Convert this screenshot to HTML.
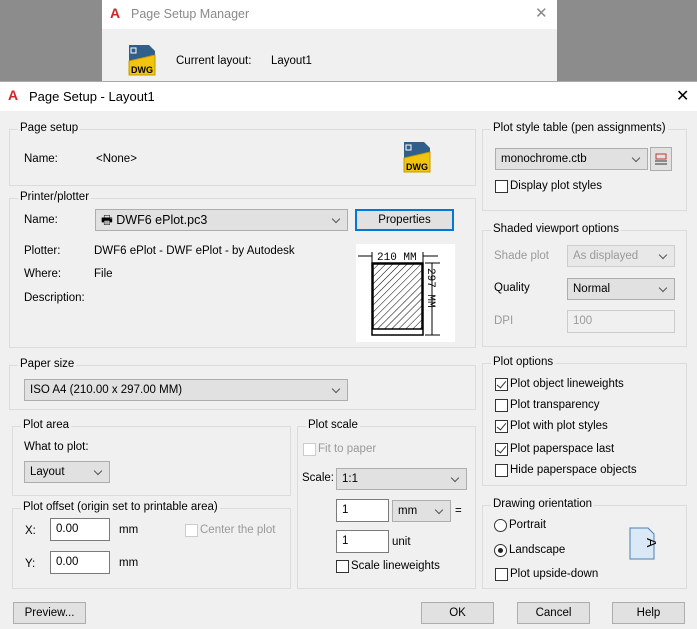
<!DOCTYPE html>
<html><head><style>
*{box-sizing:border-box;margin:0;padding:0}
body{width:697px;height:629px;position:relative;overflow:hidden;background:#8c8c8c;font-family:"Liberation Sans",sans-serif;font-size:11.5px;color:#000}
.a{position:absolute;white-space:nowrap}
.g{position:absolute;border:1px solid #dcdcdc}
.gl{position:absolute;top:-8px;left:8px;background:#f0f0f0;padding:0 2px;font-size:11.5px}
.dd{position:absolute;background:#e1e1e1;border:1px solid #adadad;height:22px;padding:0 5px;line-height:21px}
.dd:after{content:"";position:absolute;right:8px;top:6px;width:5px;height:5px;border-right:1px solid #555;border-bottom:1px solid #555;transform:rotate(45deg)}
.dis{color:#9a9a9a}
.in{position:absolute;background:#fff;border:1px solid #7a7a7a;height:23px;padding:4px 5px}
.btn{position:absolute;background:#e1e1e1;border:1px solid #adadad;height:22px;text-align:center;line-height:20px}
.cb{position:absolute;width:13px;height:13px;border:1px solid #333;background:#fff}
.cb.ck:after{content:"";position:absolute;left:3px;top:0px;width:4px;height:8px;border-right:1.5px solid #333;border-bottom:1.5px solid #333;transform:rotate(40deg)}
.cb.d{border-color:#ccc}
.rb{position:absolute;width:13px;height:13px;border:1px solid #333;border-radius:50%;background:#fff}
</style></head><body>
<div class="a" style="left:102px;top:0;width:455px;height:82px;background:#f0f0f0"></div>
<div class="a" style="left:102px;top:0;width:455px;height:29px;background:#fff"></div>
<div class="a" style="left:110px;top:5px;color:#d0242a;font-weight:bold;font-size:14px">A</div>
<div class="a" style="left:131px;top:7px;color:#8a8a8a;font-size:12.5px">Page Setup Manager</div>
<div class="a" style="left:535px;top:4px;color:#888;font-size:15px">✕</div>
<svg class="a" style="left:126px;top:43px" width="32" height="34"><path d="M3 2h20l6 6v10H3z" fill="#2f5f8a"/><path d="M3 18L29 12v20H3z" fill="#f1c40f" stroke="#c49a00"/><rect x="5" y="5" width="5" height="5" fill="none" stroke="#fff"/><text x="5" y="30" font-size="9" font-weight="bold" font-family="Liberation Sans">DWG</text></svg>
<div class="a" style="left:176px;top:55px">Current layout:</div>
<div class="a" style="left:271px;top:55px">Layout1</div>
<div class="a" style="left:0;top:81px;width:697px;height:548px;background:#f0f0f0;border-top:1px solid #7eb4ea"></div>
<div class="a" style="left:0;top:82px;width:697px;height:29px;background:#fff"></div>
<div class="a" style="left:8px;top:87px;color:#d0242a;font-weight:bold;font-size:14px">A</div>
<div class="a" style="left:29px;top:89px;font-size:13px">Page Setup - Layout1</div>
<div class="a" style="left:676px;top:86px;font-size:16px">✕</div>

<div class="g" style="left:9px;top:129px;width:467px;height:57px"><span class="gl">Page setup</span></div>
<div class="a" style="left:24px;top:153px">Name:</div>
<div class="a" style="left:96px;top:153px">&lt;None&gt;</div>
<svg class="a" style="left:402px;top:140px" width="32" height="34"><path d="M2 2h20l6 6v10H2z" fill="#2f5f8a"/><path d="M2 18L28 12v20H2z" fill="#f1c40f" stroke="#c49a00"/><rect x="4" y="5" width="5" height="5" fill="none" stroke="#fff"/><text x="4" y="30" font-size="9" font-weight="bold" font-family="Liberation Sans">DWG</text></svg>

<div class="g" style="left:9px;top:198px;width:467px;height:150px"><span class="gl">Printer/plotter</span></div>
<div class="a" style="left:24px;top:214px">Name:</div>
<div class="dd" style="left:95px;top:209px;width:253px;font-size:12.5px">🖶 DWF6 ePlot.pc3</div>
<div class="btn" style="left:355px;top:209px;width:99px;border:2px solid #0078d7;line-height:18px">Properties</div>
<div class="a" style="left:24px;top:245px">Plotter:</div>
<div class="a" style="left:94px;top:245px">DWF6 ePlot - DWF ePlot - by Autodesk</div>
<div class="a" style="left:24px;top:268px">Where:</div>
<div class="a" style="left:94px;top:268px">File</div>
<div class="a" style="left:24px;top:292px">Description:</div>
<svg class="a" style="left:356px;top:244px" width="99" height="98"><rect width="99" height="98" fill="#fff"/><defs><pattern id="h" width="5" height="5" patternUnits="userSpaceOnUse" patternTransform="rotate(45)"><line x1="0" y1="0" x2="0" y2="5" stroke="#000" stroke-width="1"/></pattern></defs><rect x="16" y="19" width="51" height="72" fill="none" stroke="#000" stroke-width="1.5"/><rect x="17" y="20" width="49" height="65" fill="url(#h)" stroke="#000" stroke-width="1.5"/><line x1="16" y1="8" x2="16" y2="19" stroke="#000"/><line x1="67" y1="8" x2="67" y2="19" stroke="#000"/><line x1="2" y1="12" x2="16" y2="12" stroke="#000"/><line x1="67" y1="12" x2="82" y2="12" stroke="#000"/><text x="21" y="16" font-size="11" font-family="Liberation Mono">210 MM</text><line x1="69" y1="19" x2="84" y2="19" stroke="#000"/><line x1="69" y1="91" x2="84" y2="91" stroke="#000"/><line x1="76" y1="19" x2="76" y2="91" stroke="#000"/><text x="72" y="24" font-size="11" font-family="Liberation Mono" transform="rotate(90 72 24)">297 MM</text></svg>

<div class="g" style="left:9px;top:365px;width:467px;height:45px"><span class="gl">Paper size</span></div>
<div class="dd" style="left:24px;top:379px;width:324px">ISO A4 (210.00 x 297.00 MM)</div>

<div class="g" style="left:12px;top:426px;width:279px;height:70px"><span class="gl">Plot area</span></div>
<div class="a" style="left:24px;top:441px">What to plot:</div>
<div class="dd" style="left:24px;top:461px;width:86px">Layout</div>

<div class="g" style="left:12px;top:508px;width:279px;height:81px"><span class="gl">Plot offset (origin set to printable area)</span></div>
<div class="a" style="left:25px;top:525px">X:</div>
<div class="in" style="left:50px;top:518px;width:60px">0.00</div>
<div class="a" style="left:119px;top:524px">mm</div>
<div class="cb d" style="left:185px;top:524px"></div>
<div class="a dis" style="left:200px;top:524px">Center the plot</div>
<div class="a" style="left:25px;top:558px">Y:</div>
<div class="in" style="left:50px;top:551px;width:60px">0.00</div>
<div class="a" style="left:119px;top:557px">mm</div>

<div class="g" style="left:297px;top:426px;width:179px;height:163px"><span class="gl">Plot scale</span></div>
<div class="cb d" style="left:303px;top:443px"></div>
<div class="a dis" style="left:318px;top:443px">Fit to paper</div>
<div class="a" style="left:302px;top:472px">Scale:</div>
<div class="dd" style="left:336px;top:468px;width:131px">1:1</div>
<div class="in" style="left:336px;top:499px;width:53px">1</div>
<div class="dd" style="left:392px;top:500px;width:59px">mm</div>
<div class="a" style="left:455px;top:505px">=</div>
<div class="in" style="left:336px;top:530px;width:53px">1</div>
<div class="a" style="left:392px;top:536px">unit</div>
<div class="cb" style="left:336px;top:560px"></div>
<div class="a" style="left:351px;top:560px">Scale lineweights</div>

<div class="g" style="left:482px;top:129px;width:205px;height:82px"><span class="gl">Plot style table (pen assignments)</span></div>
<div class="dd" style="left:495px;top:148px;width:153px">monochrome.ctb</div>
<div class="btn" style="left:650px;top:147px;width:22px;height:24px;padding-top:4px"><svg width="14" height="14"><rect x="2" y="2" width="10" height="5" fill="none" stroke="#c0392b"/><line x1="1" y1="9" x2="13" y2="9" stroke="#333"/><line x1="1" y1="12" x2="13" y2="12" stroke="#333"/></svg></div>
<div class="cb" style="left:495px;top:180px"></div>
<div class="a" style="left:510px;top:180px">Display plot styles</div>

<div class="g" style="left:482px;top:230px;width:205px;height:117px"><span class="gl">Shaded viewport options</span></div>
<div class="a dis" style="left:494px;top:250px">Shade plot</div>
<div class="dd dis" style="left:567px;top:245px;width:108px;background:#e8e8e8;border-color:#ccc">As displayed</div>
<div class="a" style="left:494px;top:282px">Quality</div>
<div class="dd" style="left:567px;top:278px;width:108px">Normal</div>
<div class="a dis" style="left:494px;top:315px">DPI</div>
<div class="in dis" style="left:567px;top:310px;width:108px;background:#f0f0f0;border-color:#ccc">100</div>

<div class="g" style="left:482px;top:363px;width:205px;height:123px"><span class="gl">Plot options</span></div>
<div class="cb ck" style="left:495px;top:378px"></div><div class="a" style="left:510px;top:378px">Plot object lineweights</div>
<div class="cb" style="left:495px;top:399px"></div><div class="a" style="left:510px;top:399px">Plot transparency</div>
<div class="cb ck" style="left:495px;top:420px"></div><div class="a" style="left:510px;top:420px">Plot with plot styles</div>
<div class="cb ck" style="left:495px;top:443px"></div><div class="a" style="left:510px;top:443px">Plot paperspace last</div>
<div class="cb" style="left:495px;top:464px"></div><div class="a" style="left:510px;top:464px">Hide paperspace objects</div>

<div class="g" style="left:482px;top:505px;width:205px;height:84px"><span class="gl">Drawing orientation</span></div>
<div class="rb" style="left:494px;top:519px"></div><div class="a" style="left:509px;top:519px">Portrait</div>
<div class="rb" style="left:494px;top:544px"></div><div class="a" style="left:498px;top:548px;width:5px;height:5px;border-radius:50%;background:#222"></div><div class="a" style="left:509px;top:544px">Landscape</div>
<div class="cb" style="left:495px;top:568px"></div><div class="a" style="left:510px;top:568px">Plot upside-down</div>
<svg class="a" style="left:629px;top:527px" width="27" height="33"><path d="M1 1h18l6 6v25H1z" fill="#dbe8f5" stroke="#4a7fb5"/><text x="7" y="12" font-size="14" font-family="Liberation Sans" transform="rotate(90 13 17)">A</text></svg>

<div class="btn" style="left:13px;top:602px;width:73px">Preview...</div>
<div class="btn" style="left:421px;top:602px;width:73px">OK</div>
<div class="btn" style="left:517px;top:602px;width:73px">Cancel</div>
<div class="btn" style="left:612px;top:602px;width:73px">Help</div>
</body></html>
